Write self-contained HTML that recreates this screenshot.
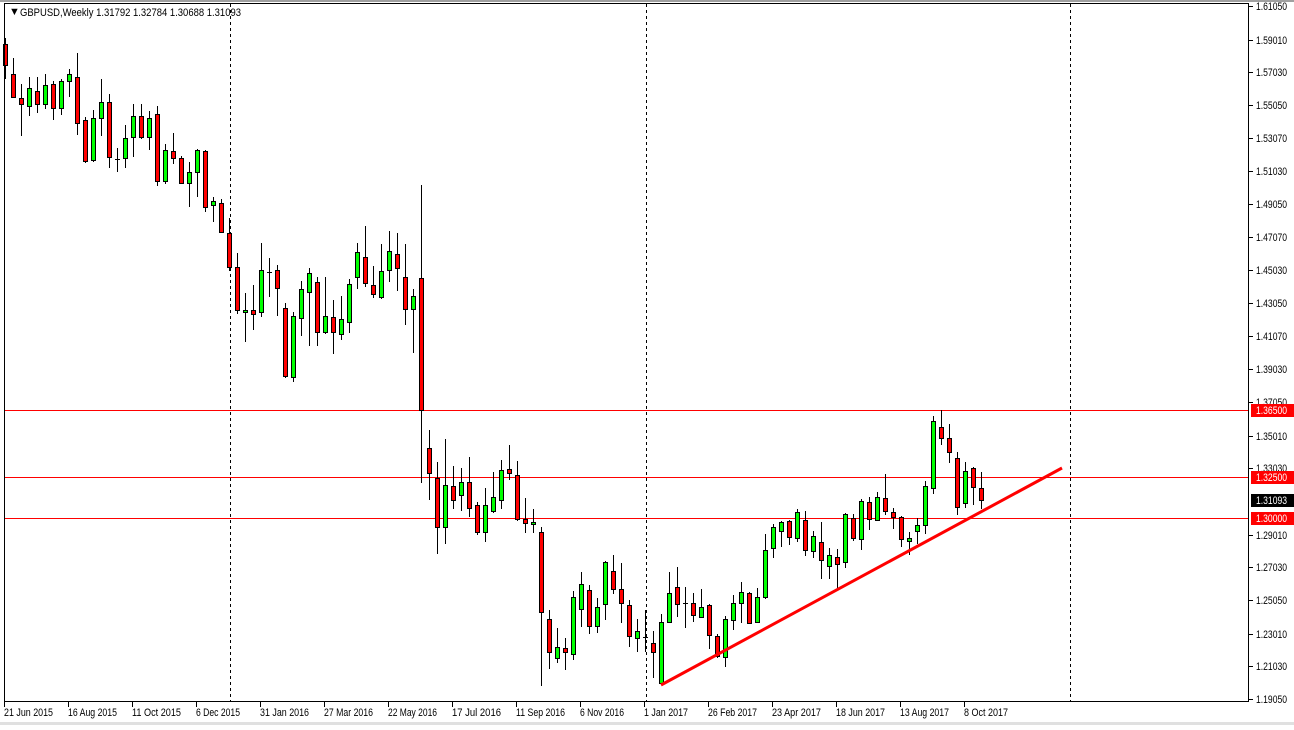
<!DOCTYPE html>
<html><head><meta charset="utf-8"><style>
html,body{margin:0;padding:0;background:#fff;}
body{width:1294px;height:725px;overflow:hidden;}
svg text{font-family:"Liberation Sans",sans-serif;font-size:11px;}
</style></head><body>
<svg id="c" width="1294" height="725" xmlns="http://www.w3.org/2000/svg" shape-rendering="crispEdges">
<rect x="0" y="0" width="1294" height="725" fill="#fff"/>
<rect x="0" y="0" width="1294" height="2" fill="#a0a0a0"/>
<rect x="0" y="722" width="1294" height="3" fill="#e0e0e0"/>
<g id="grid" stroke="#000" stroke-dasharray="3,3" stroke-width="1">
<line x1="230.5" y1="4" x2="230.5" y2="702"/>
<line x1="646.5" y1="4" x2="646.5" y2="702"/>
<line x1="1070.5" y1="4" x2="1070.5" y2="702"/>
</g>
<g stroke="#ff0000" stroke-width="1">
<line x1="4" y1="410.5" x2="1249" y2="410.5"/>
<line x1="4" y1="477.5" x2="1249" y2="477.5"/>
<line x1="4" y1="518.5" x2="1249" y2="518.5"/>
</g>
<g id="cs"></g>
<line x1="661" y1="685" x2="1062" y2="468" stroke="#ff0000" stroke-width="3" shape-rendering="auto"/>
<rect x="4.5" y="3.5" width="1244" height="698" fill="none" stroke="#000"/>
<g id="ax"></g>
<text x="9" y="15" font-size="8">▼</text>
<text x="20" y="16" textLength="221" lengthAdjust="spacingAndGlyphs">GBPUSD,Weekly  1.31792 1.32784 1.30688 1.31093</text>
</svg>
<script>
var d=[
"r 44 65 38 78","r 74 97 58 97","r 98 104 84 135","g 88 106 77 115","r 91 104 77 112","g 85 104 74 108","r 84 108 81 119","g 81 108 79 114","g 74 81 69 96","r 77 123 53 134",
"r 120 161 117 162","g 118 160 110 161","g 102 118 79 135","r 102 157 94 167","d 159 159 148 171","g 138 158 125 167","g 116 137 104 156","r 116 137 104 138","g 118 137 111 149","r 114 181 106 185",
"g 150 181 144 183","r 151 158 133 163","r 158 183 156 183","g 172 183 162 206","g 150 172 149 196","r 151 207 150 211","g 201 205 197 221","r 203 232 199 232","r 233 267 218 270","r 267 310 253 313",
"g 310 312 293 341","r 310 314 285 329","g 270 312 243 316","d 272 272 258 296","r 270 288 265 315","r 308 376 303 377","g 316 377 312 381","g 289 318 281 335","g 273 292 268 345","r 282 332 277 345",
"g 316 332 277 333","r 317 332 300 353","g 319 334 296 339","g 284 322 279 332","g 252 277 243 288","r 257 283 226 286","r 285 294 266 297","g 271 297 244 298","g 251 270 231 281","r 254 268 233 290",
"r 277 309 244 324","g 296 309 289 352","r 278 410 185 482","r 448 473 430 499","r 478 527 462 553","g 485 527 439 543","r 486 500 466 508","g 482 495 468 510","r 482 508 457 516","r 505 532 502 534",
"g 505 532 488 541","g 497 511 472 512","g 470 500 460 508","r 469 473 445 479","r 475 519 461 520","r 519 523 498 532","g 522 524 509 532","r 532 612 527 685","r 619 652 610 668","g 647 658 628 662",
"r 648 652 638 669","g 597 654 591 659","g 584 609 572 626","r 590 626 585 633","g 607 626 598 632","g 562 604 561 619","r 571 589 555 593","r 589 603 563 622","r 605 636 600 646","g 631 638 619 651",
"d 637 637 610 651","r 643 652 631 677","g 622 683 614 684","g 593 622 572 622","r 587 604 567 616","d 603 603 587 627","r 603 615 593 621","g 607 617 589 617","r 605 635 604 648","r 636 656 634 657",
"g 619 657 616 666","g 603 620 595 629","g 592 603 582 622","r 593 623 592 623","g 597 622 588 622","g 550 597 534 598","g 527 548 524 557","g 522 531 521 546","r 521 537 520 544","g 512 538 509 541",
"r 520 550 511 555","g 536 551 531 557","r 542 560 522 578","g 555 566 548 578","r 557 564 549 587","g 514 562 513 567","r 518 538 514 540","g 501 539 499 549","r 502 519 497 529","g 497 520 492 520",
"r 498 511 474 514","r 512 517 508 528","r 517 539 516 546","g 538 541 532 554","g 525 531 518 543","g 486 525 481 533","g 421 488 416 493","r 427 438 410 444","r 438 452 424 462","r 458 507 452 514",
"g 471 503 462 507","r 468 487 467 504","r 488 500 472 508"];
var g=document.getElementById("cs"),h="";
d.forEach(function(s,i){var p=s.split(" "),c=p[0],t=+p[1],b=+p[2],hi=+p[3],lo=+p[4];var x=5+8*i;
h+='<line x1="'+(x+0.5)+'" y1="'+hi+'" x2="'+(x+0.5)+'" y2="'+(lo+1)+'" stroke="#000"/>';
if(c=="d"){h+='<rect x="'+(x-2)+'" y="'+t+'" width="5" height="1" fill="#000"/>';}
else{var hh=Math.max(b-t,1);h+='<rect x="'+(x-1.5)+'" y="'+(t+0.5)+'" width="4" height="'+hh+'" fill="'+(c=="g"?"#00ff00":"#ff0000")+'" stroke="#000"/>';}
});
g.innerHTML=h;
var ax="";
var pr=["1.61050","1.59010","1.57030","1.55050","1.53070","1.51030","1.49050","1.47070","1.45030","1.43050","1.41070","1.39030","1.37050","1.35010","1.33030","1.31050","1.29010","1.27030","1.25050","1.23010","1.21030","1.19050"];
pr.forEach(function(p){var y=Math.round(6+(1.6105-parseFloat(p))/0.02*33);if(p=="1.31050")return;
ax+='<line x1="1249" y1="'+(y+0.5)+'" x2="1253" y2="'+(y+0.5)+'" stroke="#000"/><text x="1256" y="'+(y+4)+'" textLength="31" lengthAdjust="spacingAndGlyphs">'+p+'</text>';});
[["1.36500",410,"#ff0000"],["1.32500",477,"#ff0000"],["1.31093",500,"#000"],["1.30000",518,"#ff0000"]].forEach(function(a){
ax+='<rect x="1251" y="'+(a[1]-6)+'" width="43" height="13" fill="'+a[2]+'"/><text x="1256" y="'+(a[1]+4)+'" fill="#fff" textLength="31" lengthAdjust="spacingAndGlyphs">'+a[0]+'</text>';});
var dt=["21 Jun 2015","16 Aug 2015","11 Oct 2015","6 Dec 2015","31 Jan 2016","27 Mar 2016","22 May 2016","17 Jul 2016","11 Sep 2016","6 Nov 2016","1 Jan 2017","26 Feb 2017","23 Apr 2017","18 Jun 2017","13 Aug 2017","8 Oct 2017"];
dt.forEach(function(s,i){var x=5+64*i;var w=s.length==11?49:44;ax+='<line x1="'+(x-0.5)+'" y1="702" x2="'+(x-0.5)+'" y2="707" stroke="#000"/><text x="'+(x-1)+'" y="716" textLength="'+w+'" lengthAdjust="spacingAndGlyphs">'+s+'</text>';});
document.getElementById("ax").innerHTML=ax;
</script>
</body></html>
